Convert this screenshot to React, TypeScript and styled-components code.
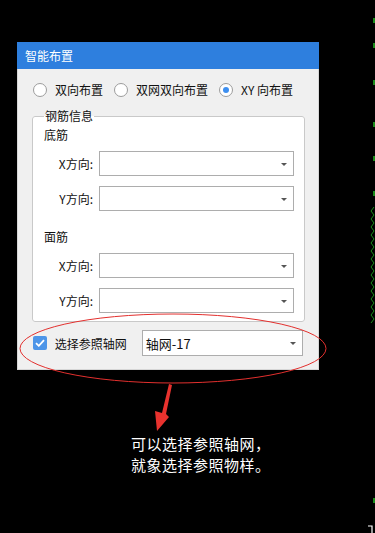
import React from "react";
import styled, { createGlobalStyle } from "styled-components";

const Global = createGlobalStyle`
  html, body { margin: 0; padding: 0; background: #000; }
  body { width: 375px; height: 533px; overflow: hidden; font-family: "Noto Sans CJK SC", "Noto Sans", sans-serif; }
`;

const Page = styled.div`
  position: relative;
  width: 375px;
  height: 533px;
  padding: 42px 0 0 17px;
  box-sizing: border-box;
`;

const Dialog = styled.div`
  width: 302px;
  background: #f0f0f0;
  font-size: 12px;
  color: #111;
`;

const TitleBar = styled.div`
  height: 27px;
  line-height: 27px;
  background: #2e7fde;
  color: #fff;
  padding-left: 8px;
  font-size: 12px;
`;

const Body = styled.div`
  padding: 12px 15px 13px 14px;
  border: 1px solid #d6d6d6;
  border-top: none;
`;

const RadioRow = styled.div`
  display: flex;
  align-items: center;
  height: 18px;
  padding-left: 1px;
  gap: 11px;
`;

const RadioItem = styled.label`
  display: flex;
  align-items: center;
  gap: 8px;
  line-height: 18px;
  white-space: nowrap;
`;

const RadioCircle = styled.span<{ $on?: boolean }>`
  width: 14px;
  height: 14px;
  box-sizing: border-box;
  border-radius: 50%;
  border: 1px solid #9c9c9c;
  background: #fff;
  display: flex;
  align-items: center;
  justify-content: center;
  &::after {
    content: "";
    width: 6px;
    height: 6px;
    border-radius: 50%;
    background: ${(p) => (p.$on ? "#3d8ff0" : "transparent")};
  }
`;

const Group = styled.fieldset`
  margin: 9px 0 0 0;
  padding: 0 10px 8px 11px;
  border: 1px solid #c9c9c9;
  border-radius: 3px;
  background: #fff;
`;

const Legend = styled.legend`
  padding: 0 1px;
  line-height: 16px;
  font-size: 12px;
  background: transparent;
`;

const SectionTitle = styled.div<{ $top: number }>`
  line-height: 16px;
  height: 16px;
  margin-top: ${(p) => p.$top}px;
`;

const FieldRow = styled.div<{ $top: number }>`
  display: flex;
  align-items: center;
  gap: 6px;
  margin-top: ${(p) => p.$top}px;
`;

const FieldLabel = styled.span`
  width: 49px;
  text-align: right;
  white-space: nowrap;
`;

const Select = styled.div<{ $w: number; $h: number }>`
  position: relative;
  width: ${(p) => p.$w}px;
  height: ${(p) => p.$h}px;
  box-sizing: border-box;
  border: 1px solid #adadad;
  background: #fff;
  display: flex;
  align-items: center;
  padding-left: 3px;
  font-size: 13px;
  color: #111;
  &::after {
    content: "";
    position: absolute;
    right: 6px;
    top: 50%;
    margin-top: -1px;
    border-left: 3px solid transparent;
    border-right: 3px solid transparent;
    border-top: 3px solid #555;
  }
`;

const BottomRow = styled.div`
  display: flex;
  align-items: center;
  margin-top: 8px;
  padding-left: 1px;
`;

const Check = styled.span`
  width: 14px;
  height: 14px;
  border-radius: 2px;
  background: #4d95e8;
  display: flex;
  align-items: center;
  justify-content: center;
`;

const CheckLabel = styled.span`
  margin-left: 8px;
  width: 88px;
  white-space: nowrap;
`;

const Note = styled.div`
  margin: 63px 0 0 114px;
  color: #fff;
  font-size: 15px;
  line-height: 21px;
  letter-spacing: 0.5px;
`;

const Overlay = styled.svg`
  position: absolute;
  left: 0;
  top: 0;
  pointer-events: none;
`;

export default function App() {
  const greenDots = [20, 45, 82, 124, 158, 193, 500];
  let wave = "";
  for (let y = 207, i = 0; y <= 326; y += 4, i++) {
    wave += `${i % 2 === 0 ? 374 : 371},${y} `;
  }
  return (
    <>
      <Global />
      <Page>
        <Dialog>
          <TitleBar>智能布置</TitleBar>
          <Body>
            <RadioRow>
              <RadioItem>
                <RadioCircle />
                双向布置
              </RadioItem>
              <RadioItem>
                <RadioCircle />
                双网双向布置
              </RadioItem>
              <RadioItem>
                <RadioCircle $on />
                XY 向布置
              </RadioItem>
            </RadioRow>
            <Group>
              <Legend>钢筋信息</Legend>
              <SectionTitle $top={3}>底筋</SectionTitle>
              <FieldRow $top={8}>
                <FieldLabel>X方向:</FieldLabel>
                <Select $w={195} $h={25} />
              </FieldRow>
              <FieldRow $top={10}>
                <FieldLabel>Y方向:</FieldLabel>
                <Select $w={195} $h={25} />
              </FieldRow>
              <SectionTitle $top={18}>面筋</SectionTitle>
              <FieldRow $top={8}>
                <FieldLabel>X方向:</FieldLabel>
                <Select $w={195} $h={25} />
              </FieldRow>
              <FieldRow $top={10}>
                <FieldLabel>Y方向:</FieldLabel>
                <Select $w={195} $h={25} />
              </FieldRow>
            </Group>
            <BottomRow>
              <Check>
                <svg width="10" height="8" viewBox="0 0 10 8">
                  <path d="M1 4.2 L3.8 6.8 L9 1.2" fill="none" stroke="#fff" strokeWidth="1.8" />
                </svg>
              </Check>
              <CheckLabel>选择参照轴网</CheckLabel>
              <Select $w={163} $h={26}>轴网-17</Select>
            </BottomRow>
          </Body>
        </Dialog>
        <Note>
          可以选择参照轴网，
          <br />
          就象选择参照物样。
        </Note>
        <Overlay width="375" height="533" viewBox="0 0 375 533">
          <ellipse cx="173" cy="348.5" rx="153" ry="34.5" fill="none" stroke="#e3302e" strokeWidth="1" />
          <polygon points="169,384 172,385 166,414 169,417 157,431 155,411 162,413" fill="#e8322e" />
          {greenDots.map((y) => (
            <rect key={y} x="373" y={y - 2} width="2" height="5" fill="#1c8c1c" />
          ))}
          <polyline points={wave} fill="none" stroke="#1c8c1c" strokeWidth="1" />
          <path d="M368 526 H372 V533" fill="none" stroke="#fff" strokeWidth="1.2" />
        </Overlay>
      </Page>
    </>
  );
}
